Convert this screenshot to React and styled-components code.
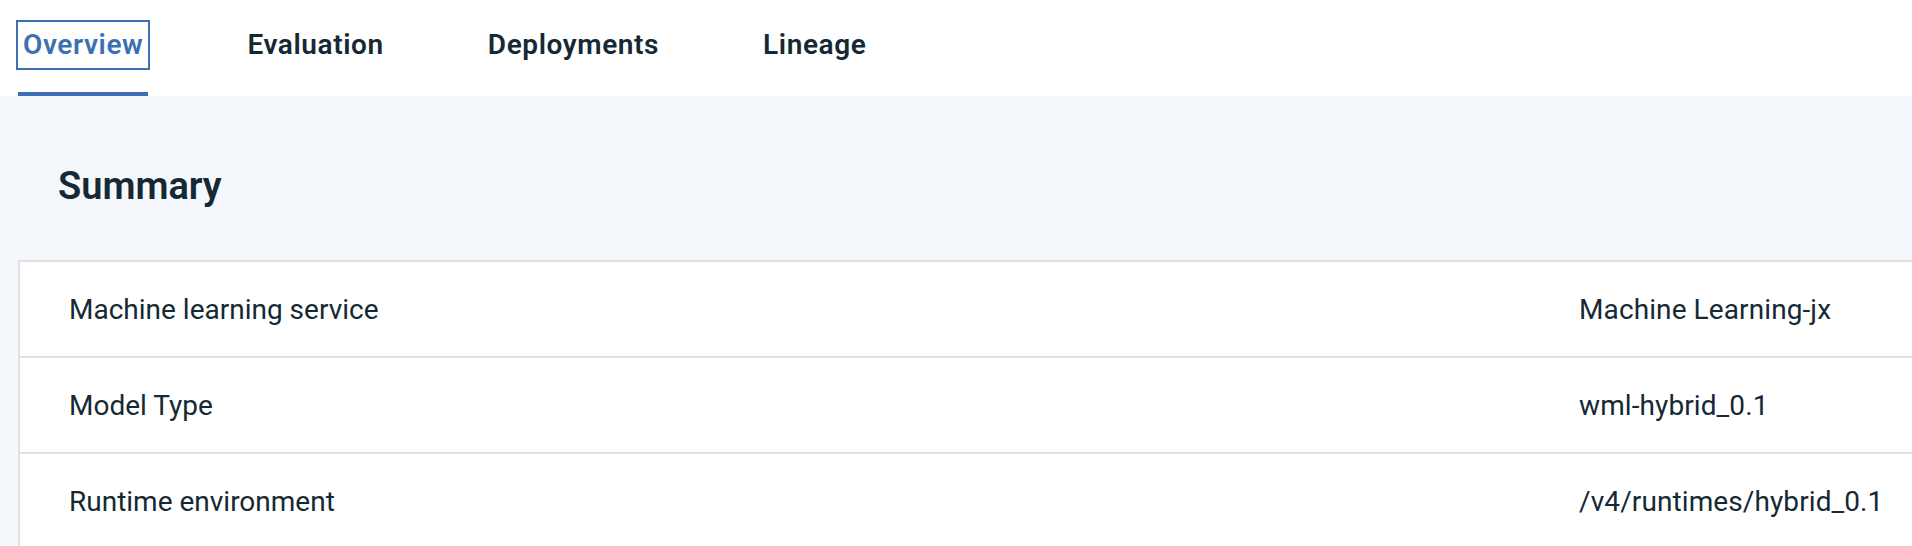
import React from 'react'
import styled, { createGlobalStyle } from 'styled-components'

const GlobalStyle = createGlobalStyle`
  html, body {
    margin: 0;
    padding: 0;
    background: #f4f7fb;
    overflow: hidden;
  }
  body {
    font-family: Roboto, "Noto Sans", sans-serif;
    color: #152935;
  }
`

const Page = styled.div`
  min-height: 546px;
  background: #f4f7fb;
`

const TabBar = styled.nav`
  background: #fff;
  height: 96px;
`

const TabList = styled.ul`
  display: flex;
  gap: 94px;
  height: 100%;
  margin: 0;
  padding: 0 0 0 18px;
  list-style: none;
`

const Tab = styled.li`
  display: flex;
  align-items: flex-start;
  box-sizing: border-box;
  padding-top: 22px;
  border-bottom: 4px solid ${props => props.$active ? '#3d70b2' : 'transparent'};
`

const TabLink = styled.a`
  display: flex;
  align-items: center;
  height: 45px;
  padding: 0 5px 1px;
  font-size: 28px;
  font-weight: 600;
  letter-spacing: 0.6px;
  color: ${props => props.$active ? '#3d70b2' : '#152935'};
  text-decoration: none;
  cursor: pointer;
  outline: ${props => props.$active ? '2px solid #3d70b2' : 'none'};
`

const Content = styled.main`
  padding: 66px 0 0 18px;
`

const Heading = styled.h2`
  margin: 0 0 50px;
  padding-left: 40px;
  font-size: 38px;
  font-weight: 600;
  line-height: 48px;
  color: #152935;
`

const Table = styled.div`
  background: #fff;
  border: 2px solid #dfe3e6;
  border-right: none;
`

const Row = styled.div`
  display: grid;
  grid-template-columns: 1559px 1fr;
  align-items: center;
  height: 94px;
  border-bottom: 2px solid #dfe3e6;
`

const Label = styled.div`
  padding-left: 49px;
  font-size: 28px;
  font-weight: 400;
`

const Value = styled.div`
  font-size: 28px;
  font-weight: 400;
  letter-spacing: 0.1px;
`

const tabs = ['Overview', 'Evaluation', 'Deployments', 'Lineage']

const rows = [
  ['Machine learning service', 'Machine Learning-jx'],
  ['Model Type', 'wml-hybrid_0.1'],
  ['Runtime environment', '/v4/runtimes/hybrid_0.1'],
]

export default function App() {
  return (
    <Page>
      <GlobalStyle />
      <TabBar>
        <TabList>
          {tabs.map((t, i) => (
            <Tab key={t} $active={i === 0}>
              <TabLink $active={i === 0}>{t}</TabLink>
            </Tab>
          ))}
        </TabList>
      </TabBar>
      <Content>
        <Heading>Summary</Heading>
        <Table>
          {rows.map(([label, value]) => (
            <Row key={label}>
              <Label>{label}</Label>
              <Value>{value}</Value>
            </Row>
          ))}
        </Table>
      </Content>
    </Page>
  )
}
